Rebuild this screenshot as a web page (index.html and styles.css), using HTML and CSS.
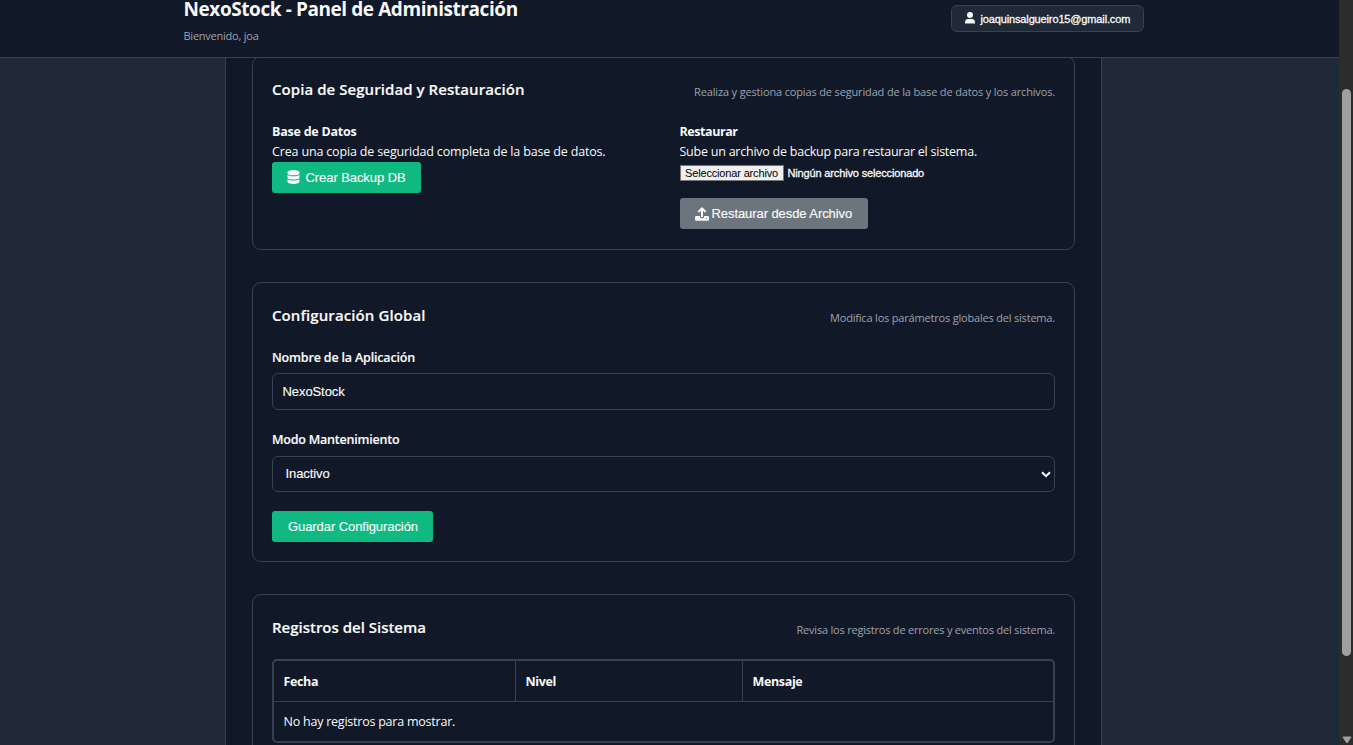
FILE: index.html
```html
<!DOCTYPE html>
<html lang="es">
<head>
<meta charset="utf-8">
<title>NexoStock - Panel de Administración</title>
<link rel="stylesheet" href="styles.css">
</head>
<body>
<div class="viewport">
  <div class="page">
    <header class="topbar">
      <div class="brand">
        <h1 class="brand-title">NexoStock - Panel de Administración</h1>
        <p class="brand-sub">Bienvenido, joa</p>
      </div>
      <button class="user" type="button">
        <svg class="user-icon" viewBox="0 0 10 12"><circle cx="5" cy="3" r="3"/><path d="M0 11.6V10.400A3.400 3.400 0 0 1 3.400 7H6.600A3.400 3.400 0 0 1 10 10.400V11.600Z"/></svg>
        <span>joaquinsalgueiro15@gmail.com</span>
      </button>
    </header>
    <main class="panel">
      <section class="card card-backup">
        <div class="card-head">
          <h2 class="card-title t-backup">Copia de Seguridad y Restauración</h2>
          <p class="card-note n-backup">Realiza y gestiona copias de seguridad de la base de datos y los archivos.</p>
        </div>
        <div class="columns">
          <div>
            <div class="sub-title">Base de Datos</div>
            <p class="text">Crea una copia de seguridad completa de la base de datos.</p>
            <button class="btn btn-create" type="button">
              <svg class="icon-db" viewBox="0 0 12 14"><path d="M0 2.300C0 1 2.600 0 6 0s6 1 6 2.300v.9C12 4.500 9.400 5.300 6 5.300S0 4.500 0 3.200ZM0 5c1.300.9 3.500 1.300 6 1.300s4.700-.4 6-1.300V7.500C12 8.700 9.400 9.600 6 9.600S0 8.700 0 7.500ZM0 9.300c1.300.9 3.500 1.300 6 1.300s4.700-.4 6-1.300v2.200C12 12.900 9.400 14 6 14s-6-1.100-6-2.500Z"/></svg>
              <span>Crear Backup DB</span>
            </button>
          </div>
          <div>
            <div class="sub-title tight">Restaurar</div>
            <p class="text text-restore">Sube un archivo de backup para restaurar el sistema.</p>
            <div class="file">
              <button class="file-btn" type="button">Seleccionar archivo</button>
              <span class="file-name">Ningún archivo seleccionado</span>
            </div>
            <button class="btn btn-restore" type="button">
              <svg class="icon-up" viewBox="0 0 14 14"><path d="M7 0 11.300 4.300 10.200 5.700 8 3.700V10H6V3.700L3.800 5.700 2.700 4.300Z"/><path fill-rule="evenodd" d="M1.200 9H5v1.200a.8.8 0 0 0 .8.800H8.200a.8.800 0 0 0 .8-.8V9h3.800A1.200 1.200 0 0 1 14 10.200v2.300a1.200 1.200 0 0 1-1.200 1.200H1.200A1.200 1.200 0 0 1 0 12.500V10.200A1.200 1.200 0 0 1 1.200 9ZM11.700 10.900a.6.600 0 1 0 .01 0Z"/></svg>
              <span>Restaurar desde Archivo</span>
            </button>
          </div>
        </div>
      </section>

      <section class="card">
        <div class="card-head">
          <h2 class="card-title t-config">Configuración Global</h2>
          <p class="card-note n-config">Modifica los parámetros globales del sistema.</p>
        </div>
        <label class="label" for="app">Nombre de la Aplicación</label>
        <input class="field" id="app" value="NexoStock">
        <div class="label label-mode">Modo Mantenimiento</div>
        <div class="field select">
          <span>Inactivo</span>
          <svg class="chevron" viewBox="0 0 10 7"><path d="M1 1.200 5 5.200 9 1.200"/></svg>
        </div>
        <button class="btn btn-save" type="button">Guardar Configuración</button>
      </section>

      <section class="card card-logs">
        <div class="card-head">
          <h2 class="card-title">Registros del Sistema</h2>
          <p class="card-note">Revisa los registros de errores y eventos del sistema.</p>
        </div>
        <div class="table">
          <div class="row row-head"><div class="cell">Fecha</div><div class="cell">Nivel</div><div class="cell">Mensaje</div></div>
          <div class="row-empty">No hay registros para mostrar.</div>
        </div>
      </section>
    </main>
  </div>
  <div class="scrollbar">
    <div class="thumb"></div>
    <svg class="arrow" viewBox="0 0 10 8"><path d="M1.200 .5H8.800Q9.800.600 9.200 1.600L6 6.600Q5 7.800 4 6.600L.8 1.600Q.2.600 1.200.5Z"/></svg>
  </div>
</div>
</body>
</html>
```
FILE: styles.css
```css
* { box-sizing: border-box; }
body { margin: 0; background: #1f2937; color: #f9fafb; font-family: "Open Sans", "Noto Sans", sans-serif; font-size: 12.5px; }
h1, h2, p { margin: 0; }
button, input { font-family: "Liberation Sans", Arial, sans-serif; margin: 0; }
svg { display: block; flex: none; fill: currentColor; }

.viewport { display: flex; height: 745px; overflow: hidden; }
.page { flex: 1; height: 745px; overflow: hidden; display: flex; flex-direction: column; }

.topbar { position: relative; z-index: 1; flex: none; height: 58px; padding: 0 195px 0 183.500px; display: flex; justify-content: space-between; align-items: flex-start; background: #111827; border-bottom: 1px solid #374151; }
.brand-title { font-size: 19px; font-weight: 700; line-height: 19px; letter-spacing: -0.42px; white-space: nowrap; }
.brand-sub { margin-top: 9px; font-size: 11px; line-height: 16px; letter-spacing: -0.237px; color: #9ca3af; }
.user { margin-top: 5px; width: 193px; height: 27px; padding: 0 0 0 13px; display: flex; align-items: center; gap: 5.500px; background: #1f2937; border: 1px solid #374151; border-radius: 6px; color: #f9fafb; font-size: 11px; letter-spacing: -0.14px; -webkit-text-stroke: 0.3px; white-space: nowrap; }
.user-icon { width: 10px; height: 12px; margin-top: -2px; }

.panel { flex: none; width: 877px; margin: -2px 0 0 225px; padding: 0 26px; display: flex; flex-direction: column; gap: 32px; background: #111827; border: solid #374151; border-width: 0 1px; }
.card { padding: 19px; border: 1px solid #374151; border-radius: 9px; }
.card-backup { height: 194px; }
.card-logs { height: 200px; }
.card-head { height: 26px; margin-bottom: 19px; display: flex; justify-content: space-between; }
.card-title { font-size: 15px; font-weight: 600; line-height: 26px; letter-spacing: -0.008px; -webkit-text-stroke: 0.15px; }
.t-backup { letter-spacing: 0.063px; }
.t-config { letter-spacing: 0.101px; }
.card-note { padding-top: 6px; font-size: 11px; line-height: 20px; letter-spacing: -0.208px; color: #9ca3af; }
.n-backup { letter-spacing: -0.151px; }
.n-config { letter-spacing: -0.19px; }

.columns { display: grid; grid-template-columns: 1fr 1fr; column-gap: 32px; padding-top: 1px; }
.sub-title { line-height: 20px; font-weight: 700; letter-spacing: -0.233px; }
.tight { letter-spacing: -0.439px; }
.text { line-height: 20px; letter-spacing: -0.161px; }
.text-restore { letter-spacing: -0.236px; }

.btn { display: flex; align-items: center; height: 31px; padding: 0 0 0 15px; border: 0; border-radius: 3px; color: #f9fafb; font-size: 13px; letter-spacing: -0.073px; -webkit-text-stroke: 0.15px; white-space: nowrap; }
.btn-create { width: 149px; gap: 5.500px; background: #10b981; }
.icon-db { width: 13px; height: 14px; margin-top: -2px; }
.btn-restore { width: 188px; margin-top: 17px; gap: 3px; background: #6c757d; }
.icon-up { width: 14px; height: 14px; }
.btn-save { width: 161px; margin-top: 19px; padding-left: 16px; background: #10b981; }

.file { display: flex; align-items: center; gap: 4px; height: 16px; margin-top: 3px; font: 11px "Liberation Sans", Arial, sans-serif; letter-spacing: -0.15px; }
.file-btn { width: 104px; height: 16px; padding: 0; background: #efefef; border: 1px solid #767676; color: #000; font-size: 11px; letter-spacing: -0.158px; white-space: nowrap; }
.file-name { -webkit-text-stroke: 0.3px; }

.label { display: block; padding-top: 1px; height: 20px; line-height: 20px; font-weight: 600; letter-spacing: -0.171px; -webkit-text-stroke: 0.15px; }
.label-mode { margin-top: 19px; letter-spacing: -0.207px; }
.field { display: block; width: 100%; height: 37px; margin-top: 6px; padding: 0 9.500px; background: #111827; border: 1px solid #374151; border-radius: 6px; color: #f9fafb; font-size: 13px; letter-spacing: -0.08px; -webkit-text-stroke: 0.15px; }
.select { display: flex; align-items: center; justify-content: space-between; height: 36px; margin-top: 7px; padding: 0 3px 0 12.500px; font-family: "Liberation Sans", Arial, sans-serif; }
.select span { padding-bottom: 2px; }
.chevron { width: 10px; height: 7px; fill: none; stroke: #fff; stroke-width: 2; }

.table { height: 84px; border: 2px solid #374151; border-radius: 5px; }
.row { display: grid; grid-template-columns: 242px 227px 1fr; height: 41px; border-bottom: 1px solid #374151; }
.cell { padding-left: 9.500px; line-height: 42px; height: 40px; font-weight: 700; letter-spacing: -0.35px; border-right: 1px solid #374151; }
.cell:last-child { border-right: 0; }
.row-empty { padding-left: 9.500px; line-height: 40px; height: 39px; letter-spacing: -0.23px; }

.scrollbar { flex: none; width: 14px; height: 745px; padding: 89px 0 0 3px; display: flex; flex-direction: column; background: #2c2c2c; }
.thumb { width: 9px; height: 567px; border-radius: 5px; background: #9f9f9f; }
.arrow { width: 10px; height: 8px; margin-top: 80px; color: #9f9f9f; }
```
